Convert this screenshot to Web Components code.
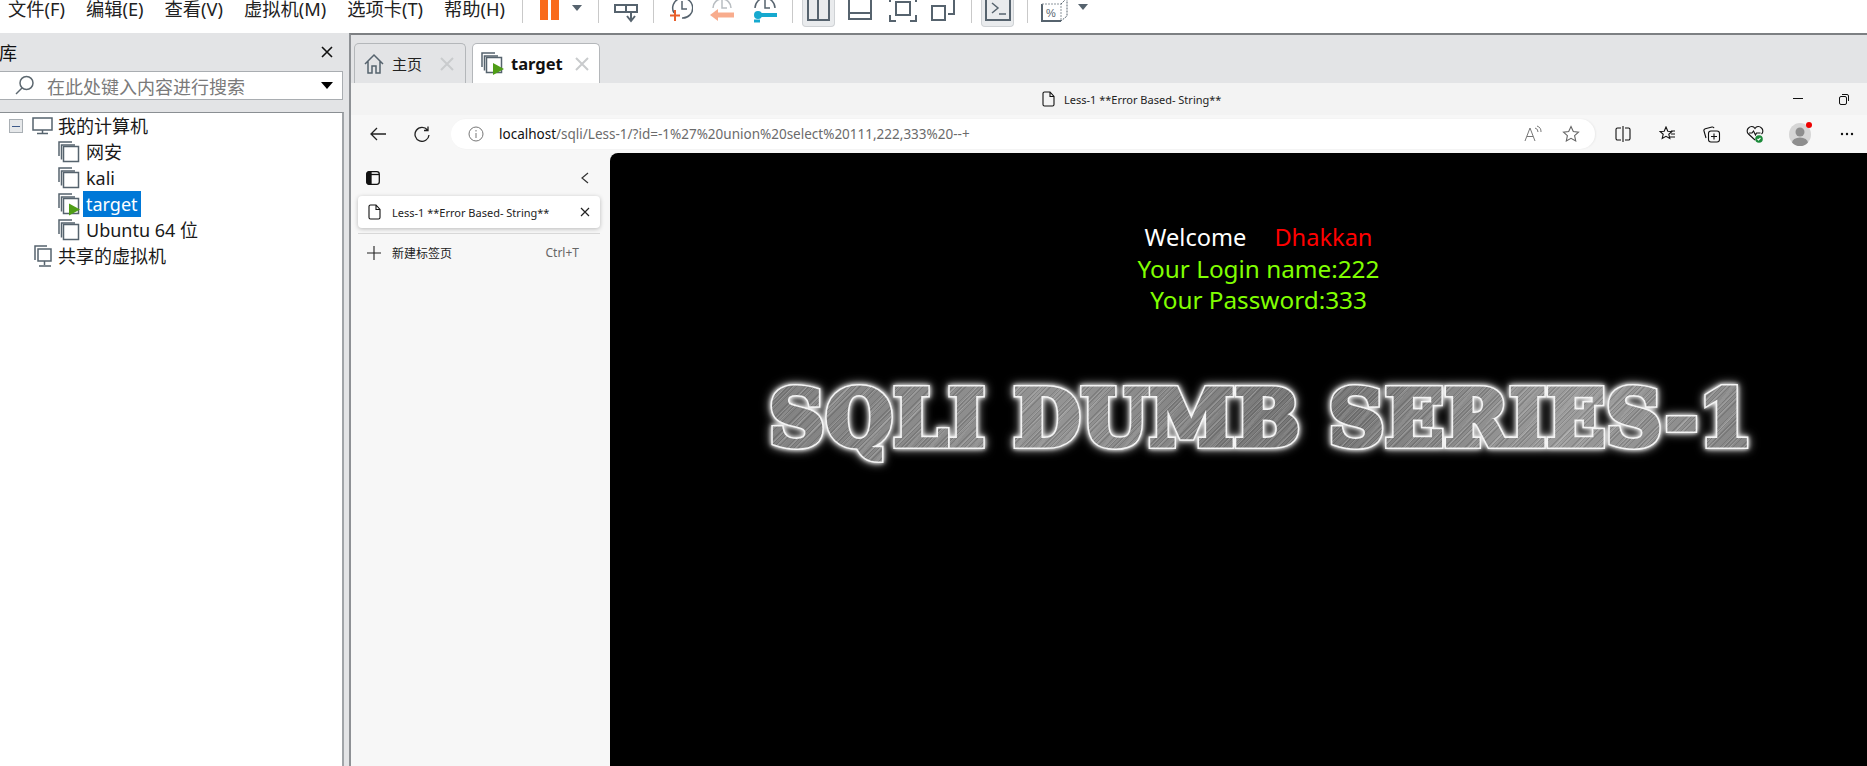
<!DOCTYPE html>
<html>
<head>
<meta charset="utf-8">
<title>target</title>
<style>
    html, body { margin: 0; padding: 0; height: 100%; overflow: hidden; background: #fff; }
    body { font-family: "Noto Sans", "Noto Sans CJK SC", sans-serif; }
</style>
</head>
<body>
<vm-app></vm-app>

<script>
const FONT = `"Noto Sans", "Noto Sans CJK SC", sans-serif`;

class VmMenubar extends HTMLElement {
    constructor() {
        super();
        this.attachShadow({ mode: 'open' });
        const menus = ['文件(F)', '编辑(E)', '查看(V)', '虚拟机(M)', '选项卡(T)', '帮助(H)'];
        this.shadowRoot.innerHTML = `
            <style>
                :host { display: flex; height: 33px; flex: none; background: #fff; overflow: hidden; align-items: flex-start; font: 18.250px/18px ${FONT}; color: #222; }
                .menus { display: flex; gap: 21px; margin-left: 8px; width: 514px; flex: none; }
                .menus span { white-space: nowrap; }
                .sep { width: 1px; height: 23px; background: #c9c9c9; flex: none; }
                svg { display: block; flex: none; }
                .on { flex: none; width: 33px; height: 27px; background: #e9ebed; border: 1px solid #cfd2d5; border-top: 0; border-radius: 0 0 4px 4px; box-sizing: border-box; display: flex; justify-content: center; }
            </style>
            <div class="menus">${menus.map(m => `<span>${m}</span>`).join('')}</div>
            <div class="sep"></div>
            <svg style="margin-left:17px" width="20" height="21"><rect width="8" height="20" fill="#f96b1c"/><rect x="11" width="8" height="20" fill="#f96b1c"/></svg>
            <svg style="margin-left:11px" width="12" height="12"><path d="M1 5h10l-5 6z" fill="#56636e"/></svg>
            <div class="sep" style="margin-left:15px"></div>
            <svg style="margin-left:15px" width="24" height="24" fill="none" stroke="#56636e" stroke-width="2"><path d="M1 5h22v7H1zM12 5v7"/><path d="M17 12v8M13 16l4 5 4-5" /></svg>
            <div class="sep" style="margin-left:15px"></div>
            <svg style="margin-left:15px" width="24" height="24" fill="none" stroke="#56636e" stroke-width="1.5"><path d="M5 13A10 10 0 1 1 13 18M13 1v8h5"/><path d="M6 10v11M1 15.500h10" stroke="#e8602c" stroke-width="2"/></svg>
            <svg style="margin-left:17px" width="24" height="24" fill="none" stroke="#b9bec2" stroke-width="1.500"><path d="M3 8A9 9 0 0 1 21 8M12 0v8h5"/><path d="M24 15H7" stroke="#f8ac8d" stroke-width="5"/><path d="M0 15l8-6v12z" fill="#f8ac8d" stroke="none"/></svg>
            <svg style="margin-left:19px" width="24" height="24" fill="none" stroke="#56636e" stroke-width="1.500"><path d="M2 8A10 10 0 0 1 22 8M12 0v8h5"/><path d="M8 15h16" stroke="#16a9cf" stroke-width="4"/><circle cx="5" cy="15" r="4" fill="#16a9cf" stroke="none"/><path d="M1 21h6" stroke="#16a9cf" stroke-width="3"/></svg>
            <div class="sep" style="margin-left:15px"></div>
            <div class="on" style="margin-left:9px"><svg width="25" height="21" fill="none" stroke="#56636e" stroke-width="2"><path d="M2 -2V20H23V-2M12 0V20"/></svg></div>
            <svg style="margin-left:13px" width="24" height="21" fill="none" stroke="#56636e" stroke-width="2"><path d="M1 -2V19H23V-2M1 13H23"/></svg>
            <svg style="margin-left:17px" width="28" height="24" fill="none" stroke="#56636e" stroke-width="2"><path d="M1 -2V2M27 -2V2M1 15V21H7M27 15V21H21M7 2H21V15H7z"/></svg>
            <svg style="margin-left:13px" width="26" height="22" fill="none" stroke="#56636e" stroke-width="2"><path d="M2 6H15V20H2zM18 14H24V-2"/></svg>
            <div class="sep" style="margin-left:15px"></div>
            <div class="on" style="margin-left:9px"><svg width="28" height="22" fill="none" stroke="#56636e" stroke-width="2"><path d="M2 -2V20H26V-2"/><path d="M8 3l6 5-6 5M15 14h7" stroke-width="1.500"/></svg></div>
            <div class="sep" style="margin-left:13px"></div>
            <svg style="margin-left:13px" width="28" height="24" fill="none" stroke="#56636e" stroke-width="2"><path d="M1 4V21H20"/><path d="M1 4H20V21" stroke="#8c959c" stroke-width="1" stroke-dasharray="2 1"/><path d="M20 4L26 -2V16L20 21" stroke-width="1" stroke-dasharray="2 1"/><text x="5" y="17" font-family="Liberation Sans" font-size="11" fill="#56636e" stroke="none">%</text></svg>
            <svg style="margin-left:8px" width="12" height="12"><path d="M1 4h10l-5 6z" fill="#56636e"/></svg>
        `;
    }
}
customElements.define('vm-menubar', VmMenubar);

class VmTreeRow extends HTMLElement {
    constructor() {
        super();
        this.attachShadow({ mode: 'open' });
    }

    connectedCallback() {
        const kind = this.getAttribute('kind');
        const selected = this.hasAttribute('selected');
        const play = `<path d="M11 10.500l11 6-11 6z" fill="#4f9d16" stroke="none"/>`;
        let icon = '';
        if (kind === 'host') {
            icon = `<svg class="exp" width="14" height="14"><rect x=".5" y=".5" width="13" height="13" fill="#e6e8ea" stroke="#a9afb4"/><path d="M3 7.500h8" stroke="#3e5a8a"/></svg>
                    <svg style="margin-left:9px" width="21" height="18" fill="none" stroke="#56636e" stroke-width="1.500"><path d="M1 1h19v12H1zM10.500 13v3M5 16.500h11"/></svg>`;
        } else if (kind === 'shared') {
            icon = `<svg style="margin-left:34px" width="19" height="23" fill="none" stroke="#56636e" stroke-width="1.500"><path d="M13 1H1V15"/><path d="M4 4h13v12H4zM10.500 16v4M5 21h12"/></svg>`;
        } else {
            icon = `<svg style="margin-left:58px" width="23" height="23" fill="none" stroke="#56636e" stroke-width="1.500"><path d="M14 1H1V15M3.500 18.500V4H17"/><path d="M5.500 5.500h15v15h-15z"/>${kind === 'run' ? play : ''}</svg>`;
        }
        this.shadowRoot.innerHTML = `
            <style>
                :host { display: flex; align-items: center; height: 26px; font: 18px/26px ${FONT}; color: #1a1a1a; white-space: nowrap; }
                .exp { margin-left: 9px; }
                .txt { margin-left: 2px; padding: 0 3px; }
                .txt.sel { background: #0078d7; color: #fff; }
                svg { flex: none; }
            </style>
            ${icon}<span class="txt ${selected ? 'sel' : ''}"><slot></slot></span>
        `;
    }
}
customElements.define('vm-tree-row', VmTreeRow);

class VmLibrary extends HTMLElement {
    constructor() {
        super();
        this.attachShadow({ mode: 'open' });
        this.shadowRoot.innerHTML = `
            <style>
                :host { display: flex; flex-direction: column; width: 349px; flex: none; background: #e3e4e6; box-sizing: border-box; font: 18px ${FONT}; }
                .head { height: 38px; display: flex; align-items: center; justify-content: space-between; margin-right: 16px; flex: none; color: #111; }
                .head span { margin-left: -1px; }
                .search { height: 29px; width: 344px; margin-left: -1px; box-sizing: border-box; border: 1px solid #a9adb1; background: #fff; display: flex; align-items: center; flex: none; color: #7a7a7a; padding-left: 14px; }
                .search span { margin-left: 12px; flex: 1; white-space: nowrap; }
                .search svg:last-child { margin-right: 8px; }
                .tree { margin-top: 12px; flex: 1; width: 344px; box-sizing: border-box; background: #fff; border-top: 1px solid #8a8f93; border-right: 2px solid #a0a4a8; }
            </style>
            <div class="head"><span>库</span>
                <svg width="12" height="12" stroke="#111" stroke-width="1.600"><path d="M1 1l10 10M11 1L1 11"/></svg>
            </div>
            <div class="search">
                <svg width="21" height="21" fill="none" stroke="#5d6870" stroke-width="1.500"><circle cx="12.500" cy="8" r="6.500"/><path d="M8 13l-6 6"/></svg>
                <span>在此处键入内容进行搜索</span>
                <svg width="14" height="9"><path d="M1 1h12l-6 7z" fill="#000"/></svg>
            </div>
            <div class="tree">
                <vm-tree-row kind="host">我的计算机</vm-tree-row>
                <vm-tree-row kind="vm">网安</vm-tree-row>
                <vm-tree-row kind="vm">kali</vm-tree-row>
                <vm-tree-row kind="run" selected>target</vm-tree-row>
                <vm-tree-row kind="vm">Ubuntu 64 位</vm-tree-row>
                <vm-tree-row kind="shared">共享的虚拟机</vm-tree-row>
            </div>
        `;
    }
}
customElements.define('vm-library', VmLibrary);

class VmTab extends HTMLElement {
    constructor() {
        super();
        this.attachShadow({ mode: 'open' });
    }

    connectedCallback() {
        const active = this.hasAttribute('active');
        const icon = active
            ? `<svg width="23" height="23" fill="none" stroke="#56636e" stroke-width="1.500"><path d="M14 1H1V15M3.500 18.500V4H17"/><path d="M5.500 5.500h15v15h-15z"/><path d="M12 11l11 6-11 6z" fill="#4f9d16" stroke="none"/></svg>`
            : `<svg width="20" height="21" fill="none" stroke="#56636e" stroke-width="1.500"><path d="M1 11L10 2l9 9M4 8v12h4v-7h4v7h4V8"/></svg>`;
        this.shadowRoot.innerHTML = `
            <style>
                :host { display: flex; align-items: center; box-sizing: border-box; height: 40px; border: 1px solid #b4b7ba; border-bottom: 0; border-radius: 5px 5px 0 0; font: 15px ${FONT}; color: #222; white-space: nowrap; padding: 0 11px 0 9px; }
                :host([active]) { background: #fff; font-weight: bold; font-size: 16.500px; color: #111; padding: 0 10px 0 8px; }
                .txt { flex: 1; margin-left: 8px; }
                :host([active]) .txt { margin-left: 7px; }
                svg { flex: none; }
                svg.x { stroke: #c9cbcd; stroke-width: 2; }
            </style>
            ${icon}<span class="txt"><slot></slot></span>
            <svg class="x" width="14" height="14"><path d="M1 1l12 12M13 1L1 13"/></svg>
        `;
    }
}
customElements.define('vm-tab', VmTab);

class EdgeToolbar extends HTMLElement {
    constructor() {
        super();
        this.attachShadow({ mode: 'open' });
        this.shadowRoot.innerHTML = `
            <style>
                :host { display: flex; align-items: center; height: 38px; flex: none; background: #f7f7f7; box-sizing: border-box; color: #111; }
                svg { flex: none; display: block; }
                .bar { width: 1144px; height: 30px; margin-left: 21px; background: #fff; border-radius: 15px; box-shadow: 1px 0 2px rgba(0,0,0,.06); display: flex; align-items: center; flex: none; font: 13.500px ${FONT}; white-space: nowrap; color: #6b6b6b; }
                .bar b { font-weight: normal; color: #111; }
                .url { margin-left: 15px; flex: 1; }
            </style>
            <svg style="margin-left:19px" width="16" height="14" fill="none" stroke="#222" stroke-width="1.300"><path d="M16 7H1M7 1L1 7l6 6"/></svg>
            <svg style="margin-left:28px" width="16" height="16" fill="none" stroke="#222" stroke-width="1.300"><path d="M13.500 4A7 7 0 1 0 15 9M14 .500V4.500H10"/></svg>
            <div class="bar">
                <svg style="margin-left:17px" width="16" height="16" fill="none" stroke="#777" stroke-width="1"><circle cx="8" cy="8" r="7"/><path d="M8 7v5M8 4v1.500"/></svg>
                <span class="url"><b>localhost</b>/sqli/Less-1/?id=-1%27%20union%20select%20111,222,333%20--+</span>
                <svg width="18" height="18" fill="none" stroke="#777" stroke-width="1"><path d="M1 16L6 3l5 13M3 11.500h6"/><path d="M11 3a4 4 0 0 1 3 4M13 1a6 6 0 0 1 4 6"/></svg>
                <svg style="margin-left:20px;margin-right:15px" width="18" height="18" fill="none" stroke="#666" stroke-width="1.100"><path d="M9 1.500l2.300 5 5.200.6-3.900 3.500 1.100 5.400L9 13.300 4.300 16l1.100-5.400L1.500 7.100l5.200-.6z"/></svg>
            </div>
            <svg style="margin-left:20px" width="16" height="16" fill="none" stroke="#111" stroke-width="1.100"><path d="M6 2H2.500a1.500 1.500 0 0 0-1.500 1.500v9A1.500 1.500 0 0 0 2.500 14H6M10 2h3.500A1.500 1.500 0 0 1 15 3.500v9a1.500 1.500 0 0 1-1.500 1.500H10M8 0v16"/></svg>
            <svg style="margin-left:28px" width="17" height="17" fill="none" stroke="#111" stroke-width="1.100"><path d="M7 1l1.800 4.200 4.200.3-3.200 2.800 1 4.200L7 10.300 3.200 12.500l1-4.200L1 5.500l4.200-.3zM12 5h4M12 8h4M11 11h5"/></svg>
            <svg style="margin-left:27px" width="18" height="18" fill="none" stroke="#111" stroke-width="1.100"><path d="M3 13L1 6c-.3-1 .3-2 1.300-2.300L9 2c1-.2 1.800.3 2 1.200"/><rect x="5.500" y="6" width="11" height="11" rx="2.500"/><path d="M11 8.500v6M8 11.500h6"/></svg>
            <svg style="margin-left:25px" width="19" height="19" fill="none" stroke="#111" stroke-width="1.100"><path d="M9 15L2.500 9a4 4 0 0 1 0-6C4.500 1 7.500 1 9 3.500 10.500 1 13.500 1 15.500 3a4 4 0 0 1 0 6"/><path d="M3 8h3l1.500-2 2 4 1-2h4"/><circle cx="13" cy="14" r="3.800" fill="#1c8a3a" stroke="none"/><path d="M11.500 14l1 1 2-2" stroke="#fff"/></svg>
            <div style="margin-left:24px;width:22px;height:23px;border-radius:50%;background:#d6d6d6;position:relative;overflow:visible;flex:none">
                <svg width="22" height="23" style="border-radius:50%"><circle cx="11" cy="9" r="4.500" fill="#8e8e8e"/><ellipse cx="11" cy="20" rx="8" ry="5.500" fill="#8e8e8e"/></svg>
                <div style="position:absolute;right:-1px;top:-1px;width:6px;height:6px;border-radius:50%;background:#ee0000"></div>
            </div>
            <svg style="margin-left:29px" width="14" height="4" fill="#111"><circle cx="2" cy="2" r="1.200"/><circle cx="7" cy="2" r="1.200"/><circle cx="12" cy="2" r="1.200"/></svg>
        `;
    }
}
customElements.define('edge-toolbar', EdgeToolbar);

class EdgeSidebar extends HTMLElement {
    constructor() {
        super();
        this.attachShadow({ mode: 'open' });
        this.shadowRoot.innerHTML = `
            <style>
                :host { display: block; width: 259px; flex: none; background: #f7f7f7; box-sizing: border-box; padding: 0 10px 0 7px; font: 12px ${FONT}; color: #222; white-space: nowrap; }
                svg { flex: none; display: block; }
                .top { height: 43px; display: flex; align-items: center; justify-content: space-between; padding: 6px 11px 0 8px; box-sizing: border-box; }
                .card { height: 32px; background: #fff; border-radius: 4px; box-shadow: 0 1px 4px rgba(0,0,0,.25); display: flex; align-items: center; padding: 0 10px; font-size: 11px; }
                .card span { flex: 1; margin-left: 11px; }
                hr { border: 0; height: 1px; background: #d8d8d8; margin: 5px 0 0; }
                .new { display: flex; align-items: center; height: 37px; padding: 0 21px 0 9px; }
                .new span:first-of-type { flex: 1; margin-left: 11px; }
                .new span:last-of-type { color: #666; }
            </style>
            <div class="top">
                <svg width="14" height="14" fill="none" stroke="#111" stroke-width="1.300"><rect x=".7" y=".7" width="12.600" height="12.600" rx="2.500"/><path d="M5 1H3a2 2 0 0 0-2 2v8a2 2 0 0 0 2 2h2z" fill="#111"/><path d="M1 3.500h12"/></svg>
                <svg width="8" height="12" fill="none" stroke="#333" stroke-width="1.200"><path d="M7 1L1 6l6 5"/></svg>
            </div>
            <div class="card">
                <svg width="13" height="16" fill="none" stroke="#111" stroke-width="1.100"><path d="M1 2.500A1.500 1.500 0 0 1 2.500 1H8l4 4.500v8A1.500 1.500 0 0 1 10.500 15h-8A1.500 1.500 0 0 1 1 13.500zM8 1v4.500h4"/></svg>
                <span>Less-1 **Error Based- String**</span>
                <svg width="10" height="10" stroke="#222" stroke-width="1.200"><path d="M1 1l8 8M9 1L1 9"/></svg>
            </div>
            <hr>
            <div class="new">
                <svg width="14" height="14" stroke="#222" stroke-width="1.100"><path d="M7 0v14M0 7h14"/></svg>
                <span>新建标签页</span>
                <span>Ctrl+T</span>
            </div>
        `;
    }
}
customElements.define('edge-sidebar', EdgeSidebar);

class SqliPage extends HTMLElement {
    constructor() {
        super();
        this.attachShadow({ mode: 'open' });
        this.shadowRoot.innerHTML = `
            <style>
                :host { display: block; flex: 1; min-width: 0; background: #000; border-top-left-radius: 8px; overflow: hidden; }
                .page { width: 1297px; padding-top: 69px; text-align: center; font: 24.300px/31px ${FONT}; color: #80ff00; }
                .hello { font-size: 23.600px; }
                .white { color: #fff; }
                .red { color: #f00; margin-left: 28px; }
                .banner { margin-top: 59px; height: 90px; display: flex; justify-content: center; padding-left: 6px; }
                .stack {
                    position: relative;
                    isolation: isolate;
                    font: bold 76px/90px "DejaVu Serif", serif;
                    white-space: nowrap;
                    letter-spacing: 1.600px;
                }
                /* glow and white rim sit behind the metal letters */
                .stack::before {
                    content: attr(data-t);
                    position: absolute;
                    left: 0;
                    top: 0;
                    z-index: -1;
                    color: #f4f4f4;
                    -webkit-text-stroke: 8px #f4f4f4;
                    filter: drop-shadow(0 0 2px #fff) drop-shadow(0 0 4px rgba(255,255,255,.7));
                }
                .metal {
                    display: inline-block;
                    color: transparent;
                    -webkit-text-stroke: 5px transparent;
                    background:
                        repeating-linear-gradient(135deg, rgba(255,255,255,.14) 0 1px, transparent 1px 5px),
                        repeating-linear-gradient(135deg, rgba(0,0,0,.12) 0 1px, transparent 1px 3px),
                        repeating-linear-gradient(128deg, rgba(255,255,255,.08) 0 3px, transparent 3px 17px),
                        linear-gradient(100deg, #808080, #949494 30%, #747474 55%, #9c9c9c 80%, #868686);
                    -webkit-background-clip: text;
                    background-clip: text;
                }
            </style>
            <div class="page">
                <div class="hello"><span class="white">Welcome</span><span class="red">Dhakkan</span></div>
                <div>Your Login name:222</div>
                <div>Your Password:333</div>
                <div class="banner"><div class="stack" data-t="SQLI DUMB SERIES-1"><span class="metal">SQLI DUMB SERIES-1</span></div></div>
            </div>
        `;
    }
}
customElements.define('sqli-page', SqliPage);

class EdgeWindow extends HTMLElement {
    constructor() {
        super();
        this.attachShadow({ mode: 'open' });
        this.shadowRoot.innerHTML = `
            <style>
                :host { display: flex; flex-direction: column; flex: 1; min-height: 0; background: #f3f3f3; }
                .title { height: 32px; flex: none; display: flex; align-items: center; font: 11px ${FONT}; color: #222; box-sizing: border-box; padding-left: 691px; white-space: nowrap; }
                .title svg { flex: none; }
                .title span { margin-left: 9px; width: 729px; }
                .body { flex: 1; display: flex; min-height: 0; }
            </style>
            <div class="title">
                <svg width="13" height="16" fill="none" stroke="#111" stroke-width="1.100"><path d="M1 2.500A1.500 1.500 0 0 1 2.500 1H8l4 4.500v8A1.500 1.500 0 0 1 10.500 15h-8A1.500 1.500 0 0 1 1 13.500zM8 1v4.500h4"/></svg>
                <span>Less-1 **Error Based- String**</span>
                <svg width="10" height="2"><rect width="10" height="1" fill="#111"/></svg>
                <svg style="margin-left:36px" width="10" height="11" fill="none" stroke="#111"><rect x=".5" y="2.500" width="7" height="8" rx="1.500"/><path d="M3 .5h5a1.500 1.500 0 0 1 1.500 1.500v5"/></svg>
            </div>
            <edge-toolbar></edge-toolbar>
            <div class="body">
                <edge-sidebar></edge-sidebar>
                <sqli-page></sqli-page>
            </div>
        `;
    }
}
customElements.define('edge-window', EdgeWindow);

class VmApp extends HTMLElement {
    constructor() {
        super();
        this.attachShadow({ mode: 'open' });
        this.shadowRoot.innerHTML = `
            <style>
                :host { display: flex; flex-direction: column; width: 1867px; height: 766px; overflow: hidden; }
                .main { flex: 1; display: flex; min-height: 0; }
                .right { flex: 1; min-width: 0; display: flex; flex-direction: column; border-left: 2px solid #8e9195; border-top: 2px solid #7d8083; }
                .tabs { height: 48px; flex: none; background: #e3e4e6; display: flex; align-items: flex-end; padding-left: 3px; gap: 6px; box-sizing: border-box; }
                vm-tab:first-child { width: 112px; }
                vm-tab:last-child { width: 128px; }
            </style>
            <vm-menubar></vm-menubar>
            <div class="main">
                <vm-library></vm-library>
                <div class="right">
                    <div class="tabs">
                        <vm-tab>主页</vm-tab>
                        <vm-tab active>target</vm-tab>
                    </div>
                    <edge-window></edge-window>
                </div>
            </div>
        `;
    }
}
customElements.define('vm-app', VmApp);
</script>
</body>
</html>
